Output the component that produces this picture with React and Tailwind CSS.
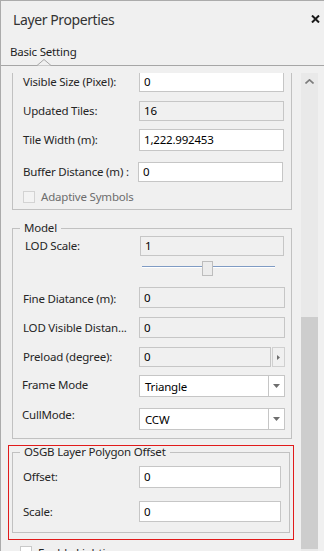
import React from "react";

const LBL = "shrink-0 whitespace-nowrap text-[11.5px] tracking-[-0.2px] text-[#262626]";

function Field({ children, className = "" }) {
  return (
    <div className={"flex items-center border border-[#c6c6c6] bg-white px-[4px] text-[11.5px] tracking-[-0.2px] text-black " + className}>
      {children}
    </div>
  );
}

function DropArrow() {
  return (
    <svg width="7" height="4" viewBox="0 0 7 4">
      <path d="M0 0H7L3.5 4Z" fill="#6e6e6e" />
    </svg>
  );
}

function Select({ value, className = "" }) {
  return (
    <div className={"flex border border-[#c6c6c6] bg-white text-[11.5px] tracking-[-0.2px] text-black " + className}>
      <div className="flex flex-1 items-center pl-[5px] pt-[2px]">{value}</div>
      <div className="flex w-[16px] items-center justify-center border-l border-[#c6c6c6]">
        <DropArrow />
      </div>
    </div>
  );
}

export default function App() {
  return (
    <div className="h-[551px] w-[324px] overflow-hidden border-l border-t border-[#ababab] bg-[#f0f0f0] font-['Noto_Sans',sans-serif]">
      {/* title */}
      <div className="flex h-[39px] items-center justify-between pb-[3px] pl-[12px] pr-[3px]">
        <div className="text-[14px] tracking-[-0.4px] text-[#333333]">Layer Properties</div>
        <svg width="9" height="8" viewBox="0 0 9 8" className="mr-[1px]">
          <path d="M1 0.5L8 7.5M8 0.5L1 7.5" stroke="#1a1a1a" strokeWidth="2" />
        </svg>
      </div>
      {/* tab */}
      <div className="flex h-[25px] items-center pl-[9px] pb-[1px]">
        <div className="text-[11.5px] tracking-[-0.2px] text-[#1e1e1e]">Basic Setting</div>
      </div>
      <div className="relative h-[1px] bg-[#a6a6a6]">
        <svg width="14" height="7" viewBox="0 0 14 7" className="absolute left-[36px] top-[-6px]">
          <path d="M0 6.5L7 0.5L14 6.5" fill="#f0f0f0" stroke="#a6a6a6" strokeWidth="1" />
        </svg>
      </div>
      <div className="h-[7px]" />
      {/* viewport */}
      <div className="flex h-[478px]">
        <div className="w-[300px] shrink-0 overflow-hidden">
          {/* group 1 */}
          <div className="ml-[11px] w-[280px] border-x border-b border-[#c1c1c1] pb-[6px]">
            <div className="-mt-[2px] flex h-[21px] items-center">
              <div className={LBL + " w-[126px] pl-[10px]"}>Visible Size (Pixel):</div>
              <Field className="h-[21px] w-[145px]">0</Field>
            </div>
            <div className="mt-[9px] flex h-[20px] items-center">
              <div className={LBL + " w-[126px] pl-[10px]"}>Updated Tiles:</div>
              <Field className="h-[20px] w-[145px] !bg-[#f0f0f0]">16</Field>
            </div>
            <div className="mt-[8px] flex h-[22px] items-center">
              <div className={LBL + " w-[126px] pl-[10px]"}>Tile Width (m):</div>
              <Field className="h-[22px] w-[145px]">1,222.992453</Field>
            </div>
            <div className="mt-[11px] flex h-[20px] items-center">
              <div className={LBL + " w-[125px] pl-[10px]"}>Buffer Distance (m) :</div>
              <Field className="h-[20px] w-[145px]">0</Field>
            </div>
            <div className="mt-[9px] flex h-[12px] items-center pl-[10px]">
              <div className="h-[12px] w-[12px] border border-[#d3d3d3] bg-[#f3f3f3]" />
              <div className="ml-[6px] text-[11.5px] tracking-[-0.2px] text-[#6d6d6d]">Adaptive Symbols</div>
            </div>
          </div>

          {/* group 2 */}
          <fieldset className="ml-[11px] mt-[12px] w-[280px] border border-[#c1c1c1] pb-[8px]">
            <legend className="ml-[7px] px-[4px] text-[11.5px] leading-[12px] tracking-[-0.2px] text-[#262626]">Model</legend>
            <div className="mt-[2px] flex h-[20px] items-center">
              <div className={LBL + " w-[127px] pl-[12px]"}>LOD Scale:</div>
              <Field className="h-[20px] w-[144px] !bg-[#f0f0f0]">1</Field>
            </div>
            <div className="mt-[5px] flex h-[15px] items-center">
              <div className="relative ml-[129px] h-[15px] w-[133px]">
                <div className="absolute left-0 right-0 top-[5px] h-[1px] bg-[#7f9bc4]" />
                <div className="absolute left-0 right-0 top-[6px] h-[1px] bg-white" />
                <div className="absolute left-[60px] top-0 h-[15px] w-[11px] border border-[#bdbdbd] bg-[#ececec]" />
              </div>
            </div>
            <div className="mt-[11px] flex h-[21px] items-center">
              <div className={LBL + " w-[126px] pl-[10px] pt-[3px]"}>Fine Diatance (m):</div>
              <Field className="h-[21px] w-[146px] !bg-[#f0f0f0]">0</Field>
            </div>
            <div className="mt-[9px] flex h-[21px] items-center">
              <div className={LBL + " w-[126px] pl-[10px]"}>LOD Visible Distan...</div>
              <Field className="h-[21px] w-[146px] !bg-[#f0f0f0]">0</Field>
            </div>
            <div className="mt-[9px] flex h-[20px] items-center">
              <div className={LBL + " w-[126px] pl-[10px]"}>Preload (degree):</div>
              <Field className="h-[20px] w-[132px] !bg-[#f0f0f0]">0</Field>
              <div className="ml-[1px] flex h-[20px] w-[13px] items-center justify-center border border-[#d0d0d0] bg-[#f0f0f0]">
                <svg width="3" height="5" viewBox="0 0 3 5">
                  <path d="M0 0L3 2.5L0 5Z" fill="#6e6e6e" />
                </svg>
              </div>
            </div>
            <div className="mt-[8px] flex h-[22px] items-center">
              <div className={LBL + " w-[126px] pl-[9px] pb-[3px]"}>Frame Mode</div>
              <Select value="Triangle" className="h-[22px] w-[146px]" />
            </div>
            <div className="mt-[11px] flex h-[22px] items-center">
              <div className={LBL + " w-[126px] pl-[9px] pb-[8px]"}>CullMode:</div>
              <Select value="CCW" className="h-[22px] w-[146px]" />
            </div>
          </fieldset>

          {/* red highlighted group */}
          <div className="ml-[7px] mt-[6px] w-[286px] border border-[#e11b1b] px-[3px] pb-[6px]">
            <fieldset className="w-[278px] border border-[#c1c1c1] pb-[10px]">
              <legend className="ml-[7px] px-[4px] text-[11.5px] leading-[12px] tracking-[-0.2px] text-[#262626]">OSGB Layer Polygon Offset</legend>
              <div className="mt-[8px] flex h-[22px] items-center">
                <div className={LBL + " w-[126px] pl-[10px]"}>Offset:</div>
                <Field className="h-[22px] w-[142px]">0</Field>
              </div>
              <div className="mt-[13px] flex h-[21px] items-center">
                <div className={LBL + " w-[126px] pl-[10px]"}>Scale:</div>
                <Field className="h-[21px] w-[142px]">0</Field>
              </div>
            </fieldset>
          </div>

          <div className="ml-[19px] mt-[6px] flex items-start">
            <div className="h-[12px] w-[12px] border border-[#c9c9c9] bg-white" />
            <div className="ml-[6px] text-[11.5px] leading-[14px] tracking-[-0.2px] text-[#262626]">Enable Lighting</div>
          </div>
        </div>

        {/* scrollbar */}
        <div className="flex w-[17px] shrink-0 flex-col bg-[#e9e9e9]">
          <div className="flex h-[17px] items-center justify-center">
            <svg width="9" height="5" viewBox="0 0 9 5">
              <path d="M0.5 4.5L4.5 0.8L8.5 4.5" fill="none" stroke="#7d7d7d" strokeWidth="1.6" />
            </svg>
          </div>
          <div className="mt-[227px] h-[232px] bg-[#cdcdcd]" />
        </div>
      </div>
    </div>
  );
}
